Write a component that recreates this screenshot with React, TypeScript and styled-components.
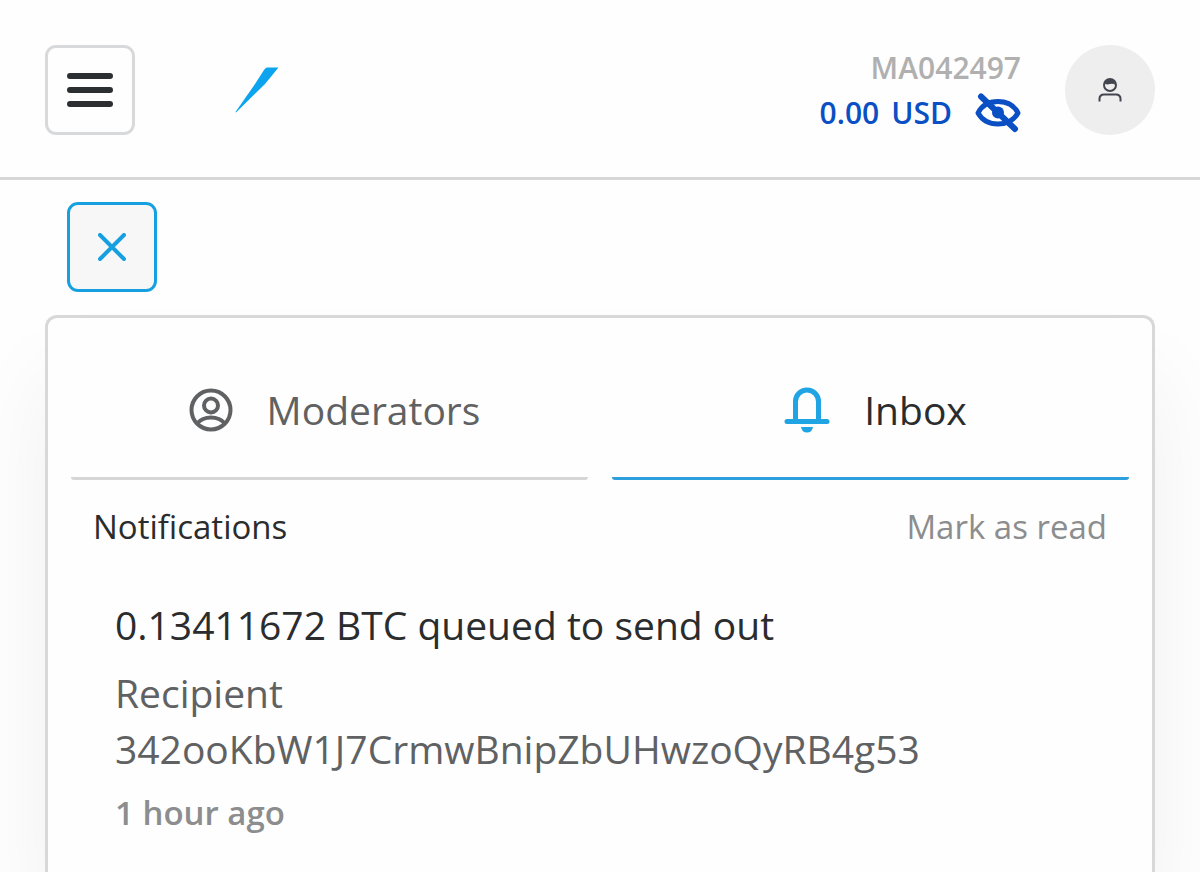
import React from "react";
import styled, { createGlobalStyle, css } from "styled-components";

const GlobalStyle = createGlobalStyle`
  *, *::before, *::after { box-sizing: border-box; }
  body { margin: 0; background: #fefefe; color: #2b2c2d; }
  body, button { font-family: "Open Sans", "Noto Sans", sans-serif; }
`;

const Page = styled.div`
  display: flex;
  flex-direction: column;
  min-height: 100vh;
  overflow: hidden;
`;

const Header = styled.header`
  display: flex;
  align-items: center;
  padding: 45px 45px 42px;
  border-bottom: 3px solid #d6d6d7;
`;

const SquareButton = styled.button<{ $active?: boolean }>`
  display: grid;
  place-items: center;
  flex: none;
  width: 90px;
  height: 90px;
  padding: 0;
  border: 3px solid ${(p) => (p.$active ? "#17a0df" : "#d8d9da")};
  border-radius: 11px;
  background: ${(p) => (p.$active ? "#f7f7f7" : "#fefefe")};
  color: ${(p) => (p.$active ? "#17a0df" : "#2b2f31")};
  cursor: pointer;
`;

const Logo = styled.a`
  display: block;
  margin-left: 100px;
  line-height: 0;
`;

const Account = styled.div`
  display: flex;
  flex-direction: column;
  align-items: flex-end;
  margin-left: auto;
  margin-right: 44px;
  font-size: 30px;
  font-weight: 600;
  line-height: 45px;
`;

const AccountId = styled.span`
  color: #b0b0b0;
`;

const Balance = styled.div`
  display: flex;
  align-items: center;
  color: #0a4fc4;
`;

const Currency = styled.span`
  margin-left: 12px;
`;

const PlainButton = styled.button`
  padding: 0;
  border: 0;
  background: none;
  color: inherit;
  cursor: pointer;
`;

const EyeButton = styled(PlainButton)`
  display: grid;
  margin-left: 23px;
`;

const Avatar = styled(PlainButton)`
  display: grid;
  place-items: center;
  width: 90px;
  height: 90px;
  border-radius: 50%;
  background: #eeeeee;
  color: #43454f;
`;

const Main = styled.main`
  display: flex;
  flex: 1;
  flex-direction: column;
  padding: 22px 45px 0;
`;

const CloseRow = styled.div`
  padding: 0 22px;
`;

const Panel = styled.section`
  flex: 1;
  margin-top: 23px;
  padding: 0 23px 32px;
  border: 3px solid #d8d8d9;
  border-bottom: 0;
  border-radius: 12px 12px 0 0;
  background: #fefefe;
  box-shadow: 0 60px 90px rgba(0, 0, 0, 0.06);
`;

const Tabs = styled.div`
  display: grid;
  grid-template-columns: 1fr 1fr;
  gap: 24px;
`;

const Tab = styled(PlainButton)<{ $selected?: boolean }>`
  display: flex;
  align-items: center;
  justify-content: center;
  gap: 34px;
  height: 162px;
  padding: 24px 0 0 10px;
  border-bottom: 3px solid #d6d6d7;
  border-radius: 3px;
  color: #606162;
  font-size: 39px;
  line-height: 56px;
  ${(p) =>
    p.$selected &&
    css`
      border-color: #2c9fdc;
      color: #2b2c2d;
    `}
`;

const ListHeader = styled.div`
  display: flex;
  align-items: center;
  justify-content: space-between;
  padding: 22px 22px 0;
  line-height: 50px;
`;

const ListTitle = styled.h2`
  margin: 0;
  font-size: 33px;
  font-weight: 400;
`;

const MarkRead = styled(PlainButton)`
  color: #8c8d8e;
  font-size: 33px;
  line-height: 50px;
`;

const Item = styled.article`
  padding: 45px 44px 0;
`;

const ItemTitle = styled.h3`
  margin: 0 0 12px;
  font-size: 39px;
  font-weight: 400;
  line-height: 56px;
`;

const ItemText = styled.p`
  margin: 0;
  color: #606162;
  font-size: 39px;
  line-height: 56px;
  overflow-wrap: anywhere;
`;

const ItemTime = styled.time`
  display: block;
  margin-top: 11px;
  color: #8c8d8e;
  font-size: 33px;
  font-weight: 600;
  line-height: 50px;
`;

const MenuIcon = () => (
  <svg width="46" height="36" viewBox="0 0 46 36" fill="none" stroke="currentColor" strokeWidth="6" strokeLinecap="round" aria-hidden="true">
    <path d="M3 4h40M3 18h40M3 32h40" />
  </svg>
);

const LogoMark = () => (
  <svg width="44" height="46" viewBox="0 0 44 46" aria-hidden="true">
    <path d="M32 0.500H43.500L30 17L1 45.500L0.500 45L20 17L29 3Q30.500 0.500 32 0.500Z" fill="#0ca4ee" />
  </svg>
);

const EyeOffIcon = () => (
  <svg width="46" height="40" viewBox="0 0 46 40" fill="none" stroke="currentColor" strokeWidth="5" strokeLinecap="round" aria-hidden="true">
    <path d="M3 20C7 12 14 8.500 23 8.500S39 12 43 20C39 27 32 31 23 31S7 27 3 20Z" strokeLinejoin="round" />
    <circle cx="23" cy="19.500" r="6" fill="currentColor" stroke="none" />
    <path d="M6 3.500L40 36" strokeWidth="6" />
  </svg>
);

const PersonIcon = () => (
  <svg width="24" height="24" viewBox="0 0 24 24" fill="none" stroke="currentColor" strokeWidth="2" aria-hidden="true">
    <circle cx="12" cy="7" r="6" />
    <path d="M6.500 5.500Q8 1 12 1T17.500 7Q15 5 12 6T6.500 5.500Z" fill="currentColor" stroke="none" />
    <path d="M1.500 23.500V21Q1.500 16.500 6 16.500H18Q22.500 16.500 22.500 21V23.500" />
  </svg>
);

const CloseIcon = () => (
  <svg width="28" height="28" viewBox="0 0 28 28" stroke="currentColor" strokeWidth="4" strokeLinecap="round" aria-hidden="true">
    <path d="M2 2L26 26M26 2L2 26" />
  </svg>
);

const ModeratorIcon = () => (
  <svg width="44" height="44" viewBox="0 0 44 44" fill="none" stroke="currentColor" strokeWidth="4" aria-hidden="true">
    <circle cx="22" cy="22" r="19.500" />
    <circle cx="22" cy="17.500" r="7" />
    <path d="M8 35.500C12 31 17 29.500 22 29.500S32 31 36 35.500" />
  </svg>
);

const BellIcon = () => (
  <svg width="46" height="46" viewBox="0 0 46 46" fill="none" stroke="#20a4e4" strokeWidth="5" strokeLinecap="round" aria-hidden="true">
    <path d="M3 34.500H43M11.500 33V14.500A11.500 11.500 0 0 1 34.500 14.500V33" />
    <path d="M17 40H29Q28 45.500 23 45.500T17 40Z" fill="#20a4e4" stroke="none" />
  </svg>
);

export default function App() {
  return (
    <Page>
      <GlobalStyle />
      <Header>
        <SquareButton type="button" aria-label="Open menu">
          <MenuIcon />
        </SquareButton>
        <Logo href="#" aria-label="Home">
          <LogoMark />
        </Logo>
        <Account>
          <AccountId>MA042497</AccountId>
          <Balance>
            <span>0.00</span>
            <Currency>USD</Currency>
            <EyeButton type="button" aria-label="Hide balance">
              <EyeOffIcon />
            </EyeButton>
          </Balance>
        </Account>
        <Avatar type="button" aria-label="Profile">
          <PersonIcon />
        </Avatar>
      </Header>
      <Main>
        <CloseRow>
          <SquareButton type="button" $active aria-label="Close panel">
            <CloseIcon />
          </SquareButton>
        </CloseRow>
        <Panel>
          <Tabs role="tablist">
            <Tab type="button" role="tab" aria-selected={false}>
              <ModeratorIcon />
              Moderators
            </Tab>
            <Tab type="button" role="tab" aria-selected $selected>
              <BellIcon />
              Inbox
            </Tab>
          </Tabs>
          <ListHeader>
            <ListTitle>Notifications</ListTitle>
            <MarkRead type="button">Mark as read</MarkRead>
          </ListHeader>
          <Item>
            <ItemTitle>0.13411672 BTC queued to send out</ItemTitle>
            <ItemText>Recipient 342ooKbW1J7CrmwBnipZbUHwzoQyRB4g53</ItemText>
            <ItemTime>1 hour ago</ItemTime>
          </Item>
        </Panel>
      </Main>
    </Page>
  );
}
